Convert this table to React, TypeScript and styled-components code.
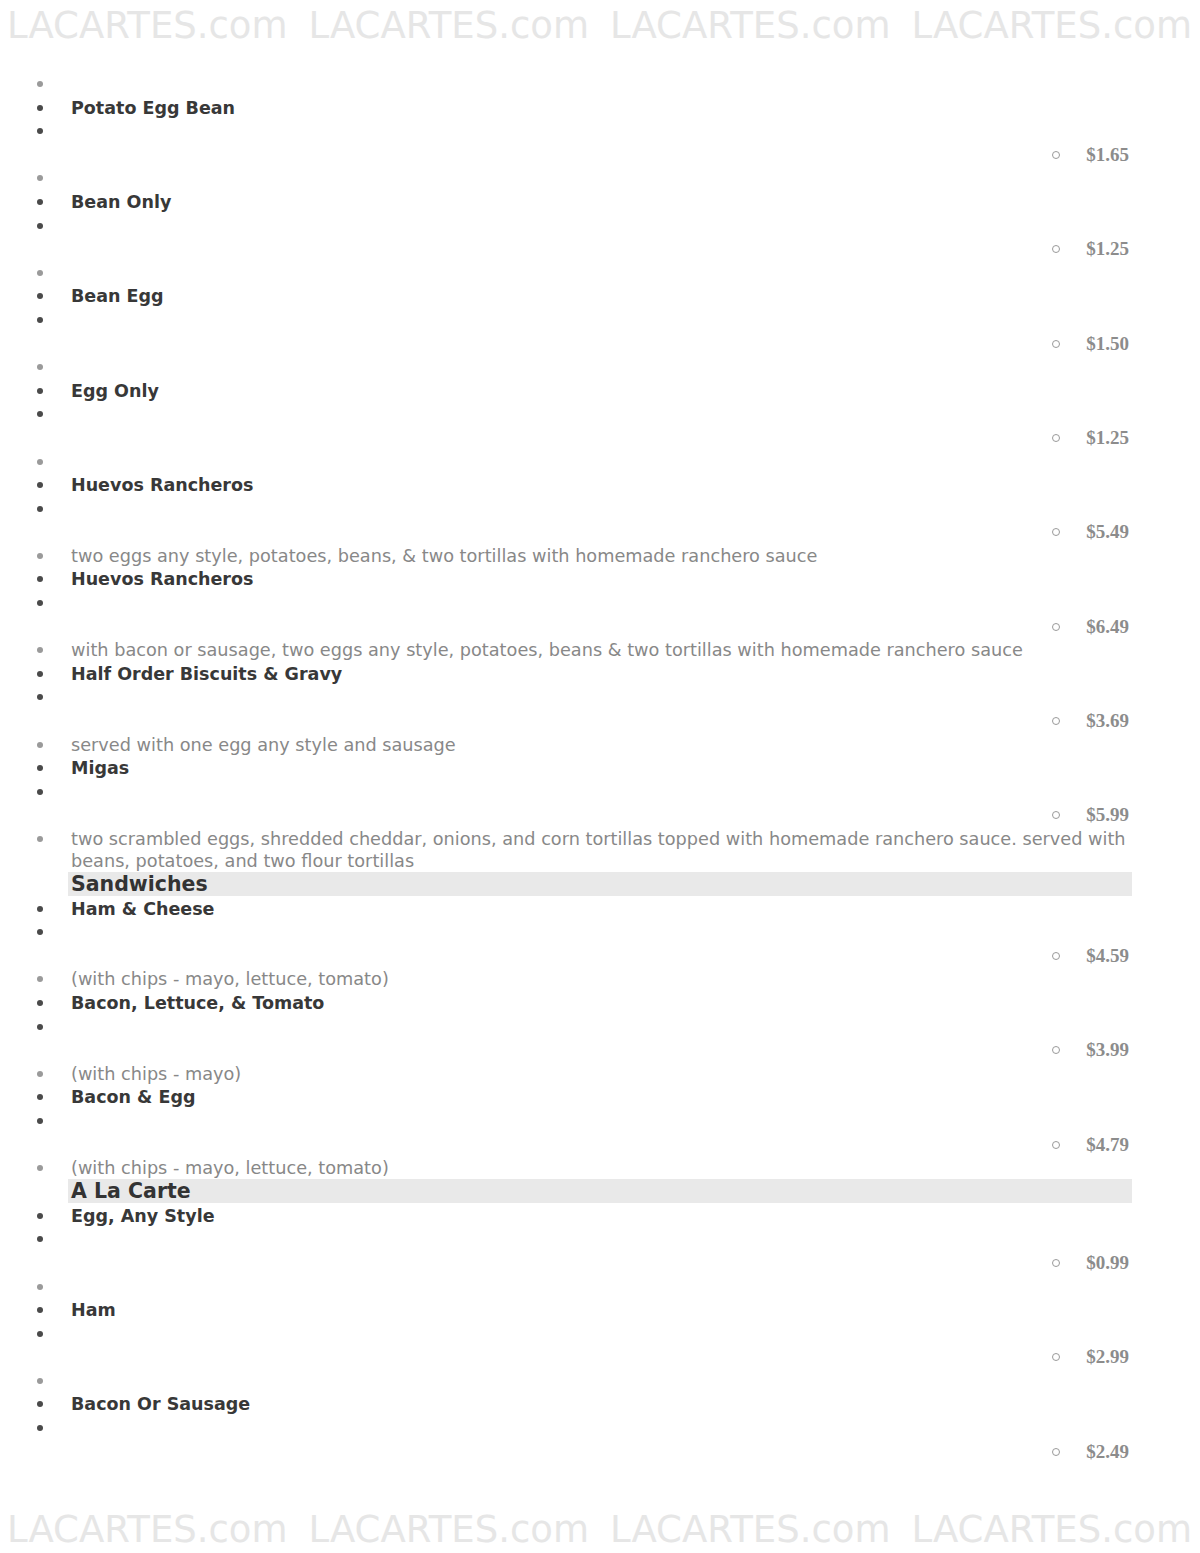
import { Fragment } from 'react';
import styled, { createGlobalStyle } from 'styled-components';

const GlobalStyle = createGlobalStyle`
  html, body {
    margin: 0;
    padding: 0;
    background: #fff;
  }
`;

const Page = styled.div`
  width: 1200px;
  height: 1553px;
  display: flex;
  flex-direction: column;
  font-family: 'DejaVu Sans', Verdana, sans-serif;
  overflow: hidden;
`;

const Watermark = styled.div<{ $h: number }>`
  display: flex;
  justify-content: space-between;
  padding: 0 8px 0 7px;
  height: ${(p) => p.$h}px;
  flex-shrink: 0;
  align-items: center;
  color: #e6e6e6;
  font-family: 'DejaVu Sans', sans-serif;
  font-size: 37px;
  white-space: nowrap;
`;

const Menu = styled.ul`
  list-style: none;
  margin: 0;
  padding: 23px 68px 0 0;
  flex: 1;
`;

const Line = styled.li<{ $tone: 'name' | 'desc' | 'blank' }>`
  display: grid;
  grid-template-columns: 71px 1fr;
  min-height: 22px;
  font-size: ${(p) => (p.$tone === 'name' ? '17.5px' : '17.7px')};
  line-height: 22px;
  margin-bottom: 1.6px;
  color: ${(p) => (p.$tone === 'desc' ? '#888' : '#383838')};
  font-weight: ${(p) => (p.$tone === 'name' ? 700 : 400)};

  &::before {
    content: '';
    width: 6px;
    height: 6px;
    border-radius: 50%;
    margin: 8px 0 0 37px;
    background: ${(p) => (p.$tone === 'desc' ? '#9a9a9a' : '#4a4a4a')};
  }
`;

const PriceLine = styled.li`
  display: flex;
  justify-content: flex-end;
  align-items: center;
  gap: 26px;
  height: 22px;
  margin-bottom: 1.6px;
  padding-right: 3px;
  font-family: 'Liberation Serif', 'Times New Roman', serif;
  font-weight: 700;
  font-size: 19px;
  color: #8c8c8c;

  &::before {
    content: '';
    width: 6px;
    height: 6px;
    border: 1px solid #9a9a9a;
    border-radius: 50%;
  }
`;

const SectionHead = styled.li`
  margin: -1.5px 0 1.5px 68px;
  padding-left: 3px;
  background: #e9e9e9;
  font-size: 20.5px;
  font-weight: 700;
  line-height: 24px;
  color: #333;
`;

type Item = { name: string; price: string; desc?: string };
type Section = { title?: string; items: Item[] };

const MENU: Section[] = [
  {
    items: [
      { name: 'Potato Egg Bean', price: '$1.65', desc: '' },
      { name: 'Bean Only', price: '$1.25', desc: '' },
      { name: 'Bean Egg', price: '$1.50', desc: '' },
      { name: 'Egg Only', price: '$1.25', desc: '' },
      {
        name: 'Huevos Rancheros',
        price: '$5.49',
        desc: 'two eggs any style, potatoes, beans, & two tortillas with homemade ranchero sauce',
      },
      {
        name: 'Huevos Rancheros',
        price: '$6.49',
        desc: 'with bacon or sausage, two eggs any style, potatoes, beans & two tortillas with homemade ranchero sauce',
      },
      { name: 'Half Order Biscuits & Gravy', price: '$3.69', desc: 'served with one egg any style and sausage' },
      {
        name: 'Migas',
        price: '$5.99',
        desc: 'two scrambled eggs, shredded cheddar, onions, and corn tortillas topped with homemade ranchero sauce. served with beans, potatoes, and two flour tortillas',
      },
    ],
  },
  {
    title: 'Sandwiches',
    items: [
      { name: 'Ham & Cheese', price: '$4.59', desc: '(with chips - mayo, lettuce, tomato)' },
      { name: 'Bacon, Lettuce, & Tomato', price: '$3.99', desc: '(with chips - mayo)' },
      { name: 'Bacon & Egg', price: '$4.79', desc: '(with chips - mayo, lettuce, tomato)' },
    ],
  },
  {
    title: 'A La Carte',
    items: [
      { name: 'Egg, Any Style', price: '$0.99', desc: '' },
      { name: 'Ham', price: '$2.99', desc: '' },
      { name: 'Bacon Or Sausage', price: '$2.49' },
    ],
  },
];

const MARK = ['LACARTES.com', 'LACARTES.com', 'LACARTES.com', 'LACARTES.com'];

export default function App() {
  return (
    <Page>
      <GlobalStyle />
      <Watermark $h={50}>
        {MARK.map((m, i) => (
          <span key={i}>{m}</span>
        ))}
      </Watermark>
      <Menu>
        {/* trailing description of the item above the cut */}
        <Line $tone="desc">
          <span />
        </Line>
        {MENU.map((section, si) => (
          <Fragment key={si}>
            {section.title && <SectionHead>{section.title}</SectionHead>}
            {section.items.map((item, ii) => (
              <Fragment key={ii}>
                <Line $tone="name">
                  <span>{item.name}</span>
                </Line>
                <Line $tone="blank">
                  <span />
                </Line>
                <PriceLine>{item.price}</PriceLine>
                {item.desc !== undefined && (
                  <Line $tone="desc">
                    <span>{item.desc}</span>
                  </Line>
                )}
              </Fragment>
            ))}
          </Fragment>
        ))}
      </Menu>
      <Watermark $h={48}>
        {MARK.map((m, i) => (
          <span key={i}>{m}</span>
        ))}
      </Watermark>
    </Page>
  );
}
